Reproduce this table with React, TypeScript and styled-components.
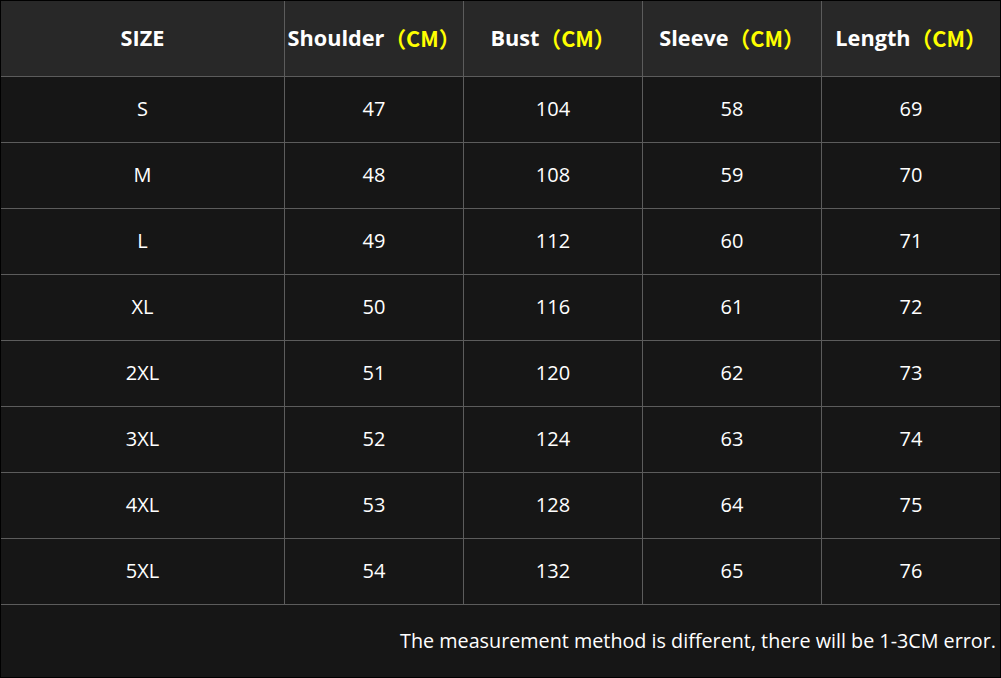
import React from "react";
import styled, { createGlobalStyle } from "styled-components";

const Global = createGlobalStyle`
  html, body { margin: 0; padding: 0; background: #161616; }
  body { font-family: "Open Sans", "Noto Sans", "Noto Sans CJK SC", sans-serif; }
`;

const Frame = styled.div`
  width: 1001px;
  height: 678px;
  box-sizing: border-box;
  border: 1px solid #000;
  background: #161616;
  display: flex;
  flex-direction: column;
`;

const Grid = styled.div`
  display: grid;
  grid-template-columns: 284px 179px 179px 179px 178px;
  grid-template-rows: 76px repeat(8, 66px);
`;

const Cell = styled.div<{ $head?: boolean; $last?: boolean }>`
  box-sizing: border-box;
  display: flex;
  align-items: center;
  justify-content: center;
  background: ${(p) => (p.$head ? "#282828" : "#161616")};
  border-bottom: 1px solid #5c5c5c;
  border-right: ${(p) => (p.$last ? "none" : "1px solid #5c5c5c")};
  color: #ffffff;
  font-size: ${(p) => (p.$head ? "21.7px" : "20px")};
  font-weight: ${(p) => (p.$head ? 700 : 400)};
  padding-bottom: 2px;
  white-space: nowrap;
`;

const Unit = styled.span`
  color: #ffff00;
  font-family: "Noto Sans CJK SC", "Open Sans", sans-serif;
  font-weight: 700;
`;

const Footer = styled.div`
  flex: 1;
  display: flex;
  align-items: center;
  justify-content: flex-end;
  padding-right: 4px;
  padding-bottom: 2px;
  color: #ffffff;
  font-size: 19.75px;
`;

const headers = ["Shoulder", "Bust", "Sleeve", "Length"];
const rows: [string, number, number, number, number][] = [
  ["S", 47, 104, 58, 69],
  ["M", 48, 108, 59, 70],
  ["L", 49, 112, 60, 71],
  ["XL", 50, 116, 61, 72],
  ["2XL", 51, 120, 62, 73],
  ["3XL", 52, 124, 63, 74],
  ["4XL", 53, 128, 64, 75],
  ["5XL", 54, 132, 65, 76],
];

export default function App() {
  return (
    <>
      <Global />
      <Frame>
        <Grid>
          <Cell $head>SIZE</Cell>
          {headers.map((h, i) => (
            <Cell $head key={h} $last={i === headers.length - 1}>
              {h}
              <Unit>（CM）</Unit>
            </Cell>
          ))}
          {rows.map((r) =>
            r.map((v, i) => (
              <Cell key={r[0] + i} $last={i === r.length - 1}>
                {v}
              </Cell>
            ))
          )}
        </Grid>
        <Footer>The measurement method is different, there will be 1-3CM error.</Footer>
      </Frame>
    </>
  );
}
